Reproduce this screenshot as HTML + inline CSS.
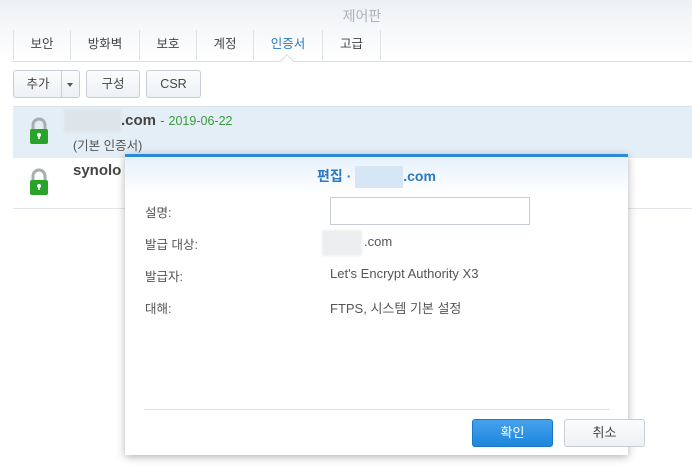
<!DOCTYPE html>
<html><head><meta charset="utf-8"><style>
*{margin:0;padding:0;box-sizing:border-box}
body{width:692px;height:468px;overflow:hidden;background:#fff;font-family:"Liberation Sans","Noto Sans CJK KR",sans-serif;font-size:12.5px;color:#333;position:relative}
.a{position:absolute}
.hdr{left:0;top:0;width:692px;height:62px;background:linear-gradient(#eef1f4,#fff)}
.tab{top:30px;height:30px;line-height:28px;text-align:center;font-size:12.5px;color:#444;border-left:1px solid #dde2e7}
.btn{border:1px solid #c7ced6;border-radius:3px;background:linear-gradient(#fbfcfd,#eef1f4);height:28px;line-height:26px;text-align:center;font-size:12.5px;color:#444}
.blur{background:#dde4ea;filter:blur(1px)}
.lock{width:20px;height:30px}
</style></head><body>
<div class="a hdr"></div>
<div class="a" style="left:0;top:6px;width:692px;text-align:center;font-size:14px;color:#aab3bb;padding-left:32px">제어판</div>
<div class="a" style="left:13px;top:61px;width:679px;height:1px;background:#d8dde2"></div>
<div class="a tab" style="left:13px;width:57px">보안</div>
<div class="a tab" style="left:70px;width:69px">방화벽</div>
<div class="a tab" style="left:139px;width:57px">보호</div>
<div class="a tab" style="left:196px;width:57px">계정</div>
<div class="a tab" style="left:253px;width:69px;color:#2a7ac0">인증서</div>
<div class="a tab" style="left:322px;width:58px">고급</div>
<div class="a" style="left:380px;top:30px;width:1px;height:30px;background:#dde2e7"></div>
<div class="a" style="left:282px;top:56px;width:10px;height:10px;background:#fff;border-left:1px solid #d8dde2;border-top:1px solid #d8dde2;transform:rotate(45deg)"></div>
<div class="a btn" style="left:13px;top:70px;width:67px"><span style="position:absolute;left:0;width:48px">추가</span><span style="position:absolute;left:47px;top:0;width:1px;height:26px;background:#c7ced6"></span><span style="position:absolute;left:53px;top:12px;border:3.5px solid transparent;border-top:4px solid #555"></span></div>
<div class="a btn" style="left:86px;top:70px;width:54px">구성</div>
<div class="a btn" style="left:146px;top:70px;width:55px">CSR</div>
<div class="a" style="left:13px;top:106px;width:679px;height:52px;background:#e4eef7;border-top:1px solid #d4e2ee"></div>
<div class="a" style="left:13px;top:208px;width:679px;height:1px;background:#e1e5e9"></div>
<svg class="a lock" style="left:29px;top:116px" viewBox="0 0 20 30"><path d="M4 14V9a6 6 0 0 1 12 0v5" fill="none" stroke="#a9adb0" stroke-width="3"/><rect x="1" y="13" width="18" height="15" rx="2" fill="#2aa32a"/><circle cx="10" cy="19" r="2" fill="#fff"/><rect x="9.2" y="19" width="1.6" height="4" fill="#fff"/></svg>
<svg class="a lock" style="left:29px;top:167px" viewBox="0 0 20 30"><path d="M4 14V9a6 6 0 0 1 12 0v5" fill="none" stroke="#a9adb0" stroke-width="3"/><rect x="1" y="13" width="18" height="15" rx="2" fill="#2aa32a"/><circle cx="10" cy="19" r="2" fill="#fff"/><rect x="9.2" y="19" width="1.6" height="4" fill="#fff"/></svg>
<div class="a blur" style="left:64px;top:109px;width:57px;height:23px"></div>
<div class="a" style="left:121px;top:112px;font-size:15px;font-weight:bold;color:#444">.com <span style="font-weight:normal;font-size:12.5px;color:#666">-</span> <span style="font-weight:normal;font-size:12.5px;color:#3a9a3a">2019-06-22</span></div>
<div class="a" style="left:73px;top:135px;color:#555">(기본 인증서)</div>
<div class="a" style="left:73px;top:162px;font-size:15px;font-weight:bold;color:#444">synolo</div>
<div class="a" style="left:125px;top:154px;width:503px;height:301px;background:#fff;box-shadow:0 2px 8px rgba(0,0,0,.3);border-top:3px solid #2b8ad8">
<div class="a" style="left:0;top:0;width:503px;height:38px;background:linear-gradient(#e7f1fb,#fff)"></div>
<div class="a" style="left:0;top:9px;width:503px;text-align:center;font-size:14px;font-weight:bold;color:#2a7ac0">편집 · <span style="display:inline-block;width:48px;height:22px;vertical-align:middle;background:#d6e6f5"></span>.com</div>
<div class="a" style="left:20px;top:45px;color:#555">설명:</div>
<div class="a" style="left:205px;top:40px;width:200px;height:28px;border:1px solid #c7ced6"></div>
<div class="a" style="left:20px;top:77px;color:#555">발급 대상:</div>
<div class="a blur" style="left:197px;top:73px;width:40px;height:26px;background:#eceeef"></div>
<div class="a" style="left:239px;top:77px;color:#555;font-size:13px">.com</div>
<div class="a" style="left:20px;top:109px;color:#555">발급자:</div>
<div class="a" style="left:205px;top:109px;color:#555;font-size:13px">Let's Encrypt Authority X3</div>
<div class="a" style="left:20px;top:141px;color:#555">대해:</div>
<div class="a" style="left:205px;top:141px;color:#555;font-size:13px">FTPS, 시스템 기본 설정</div>
<div class="a" style="left:19px;top:252px;width:466px;height:1px;background:#dde1e5"></div>
<div class="a" style="left:347px;top:262px;width:81px;height:28px;border-radius:3px;background:linear-gradient(#45a2ee,#1e86dc);border:1px solid #1a78c8;color:#fff;text-align:center;line-height:26px;font-size:13px">확인</div>
<div class="a btn" style="left:439px;top:262px;width:81px;font-size:13px">취소</div>
</div>
</body></html>
